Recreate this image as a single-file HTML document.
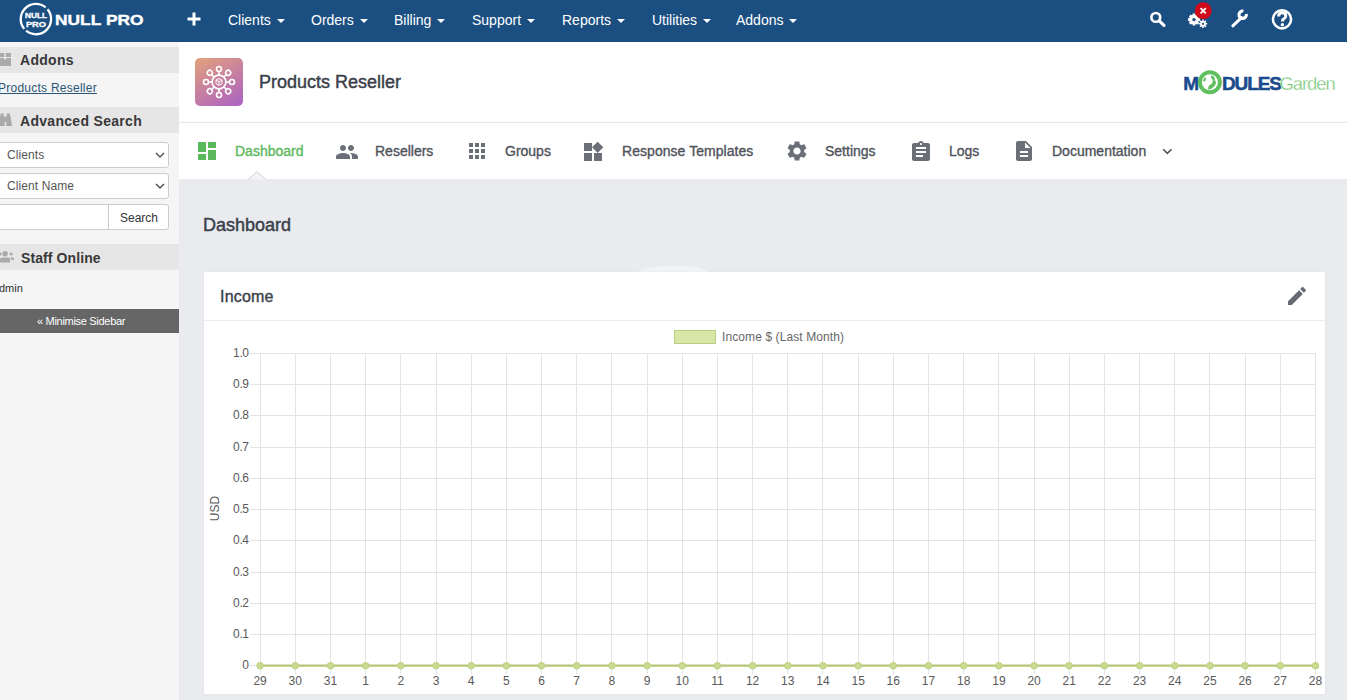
<!DOCTYPE html>
<html><head><meta charset="utf-8">
<style>
*{margin:0;padding:0;box-sizing:border-box}
html,body{width:1347px;height:700px;overflow:hidden;background:#e9ebef;font-family:"Liberation Sans",sans-serif}
.a{position:absolute;white-space:nowrap}
#nav{position:absolute;left:0;top:0;width:1347px;height:42px;background:#1b4f82}
.ni{position:absolute;top:12px;color:#fff;font-size:14px;line-height:16px}
.ni i{display:inline-block;width:0;height:0;border-left:4px solid transparent;border-right:4px solid transparent;border-top:4px solid #fff;vertical-align:middle;margin-left:6px;margin-top:-1px}
#side{position:absolute;left:0;top:42px;width:179px;height:658px;background:#f5f5f5}
.sh{position:absolute;left:0;width:179px;height:26px;background:#e6e6e6;color:#383838;font-weight:bold;font-size:14px;letter-spacing:0.3px}
.sh span{position:absolute;left:20px;top:6px;line-height:16px}
.sel{position:absolute;left:-6px;width:175px;height:26px;background:#fff;border:1px solid #ccc;border-radius:3px;font-size:12px;color:#555}
.sel span{position:absolute;left:12px;top:5px;line-height:14px;letter-spacing:0.1px}
#hdr{position:absolute;left:179px;top:42px;width:1168px;height:137px;background:#fff}
.tab{position:absolute;top:143px;font-size:14px;line-height:16px;color:#4f535b;-webkit-text-stroke:0.35px #4f535b}
.ic{position:absolute;fill:#6b6f77}
svg text{font-family:"Liberation Sans",sans-serif;font-size:12px;fill:#595959}
</style></head><body>
<div id="nav">
 <svg class="a" style="left:0;top:0" width="180" height="42">
  <path d="M47.54 9.33 A15.2 15.2 0 0 1 26.13 30.74" stroke="#fff" stroke-width="2.3" fill="none"/>
  <path d="M24.26 28.87 A15.2 15.2 0 0 1 45.67 7.46" stroke="#fff" stroke-width="2.3" fill="none"/>
  <text transform="translate(25 17.7) scale(1.14 1)" style="font-family:'Liberation Sans';font-weight:bold;font-size:7.3px;fill:#fff;stroke:#fff;stroke-width:0.3px">NULL</text>
  <text transform="translate(25.9 26.9) scale(1.26 1)" style="font-family:'Liberation Sans';font-weight:bold;font-size:7.4px;fill:#fff;stroke:#fff;stroke-width:0.3px">PRO</text>
  <text transform="translate(55 24.5) scale(1.13 1)" style="font-family:'Liberation Sans';font-weight:bold;font-size:15.4px;fill:#fff;stroke:#fff;stroke-width:0.4px">NULL PRO</text>
 </svg>
 <svg class="a" style="left:186px;top:11.3px" width="16" height="16"><path d="M8 1.5V14.5M1.5 8H14.5" stroke="#fff" stroke-width="3"/></svg>
 <div class="ni" style="left:228px">Clients<i></i></div>
 <div class="ni" style="left:311px">Orders<i></i></div>
 <div class="ni" style="left:394px">Billing<i></i></div>
 <div class="ni" style="left:472px">Support<i></i></div>
 <div class="ni" style="left:562px">Reports<i></i></div>
 <div class="ni" style="left:652px">Utilities<i></i></div>
 <div class="ni" style="left:736px">Addons<i></i></div>
 <svg class="a" style="left:1140px;top:0" width="207" height="42">
  <circle cx="15.8" cy="17.4" r="4.4" stroke="#fff" stroke-width="2.6" fill="none"/>
  <path d="M19.2 20.8 L24 25.4" stroke="#fff" stroke-width="3.2" stroke-linecap="round"/>
  <g fill="#fff">
   <circle cx="54" cy="19.6" r="4.9"/>
   <path d="M54 13.6v12M48 19.6h12M49.8 15.4l8.4 8.4M58.2 15.4l-8.4 8.4" stroke="#fff" stroke-width="2.8"/>
   <circle cx="63" cy="23.8" r="2.9"/>
   <path d="M63 19.6v8.4M58.8 23.8h8.4M60 20.8l6 6M66 20.8l-6 6" stroke="#fff" stroke-width="1.6"/>
  </g>
  <circle cx="54" cy="19.6" r="1.7" fill="#1b4f82"/>
  <circle cx="63" cy="23.8" r="1.1" fill="#1b4f82"/>
  <circle cx="63.2" cy="10.7" r="8.5" fill="#cf0a1a"/>
  <path d="M60.6 8.1 L65.8 13.3 M65.8 8.1 L60.6 13.3" stroke="#fff" stroke-width="1.8"/>
  <path d="M92.8 25.8 L101.5 17.6" stroke="#fff" stroke-width="3" stroke-linecap="round"/>
  <path d="M106.3 14 A3.7 3.7 0 1 1 103.4 11.1" stroke="#fff" stroke-width="3.1" fill="none"/>
  <circle cx="142" cy="19.3" r="9.1" stroke="#fff" stroke-width="2.5" fill="none"/>
  <path d="M138.6 16.4 Q138.6 12.8 142.2 12.8 Q145.8 12.8 145.8 15.9 Q145.8 17.8 143.8 18.8 Q142.4 19.5 142.4 21.4" stroke="#fff" stroke-width="3" fill="none"/>
  <circle cx="142.4" cy="24.8" r="1.7" fill="#fff"/>
 </svg>
</div>
<div id="side">
 <div class="sh" style="top:5px;height:26px"><span style="top:5px">Addons</span>
  <svg class="a" style="left:0;top:-1px" width="16" height="27"><path d="M0 7h4.4v4H0zM5.9 7H11v4H5.9zM0 12h11v8H0z" fill="#aaa"/><path d="M4.2 12h2v1.6h-2z" fill="#e6e6e6"/></svg>
 </div>
 <div class="a" style="left:-2px;top:39px;font-size:12px;line-height:14px;color:#2b5678;text-decoration:underline;letter-spacing:0.25px">Products Reseller</div>
 <div class="sh" style="top:65px"><span>Advanced Search</span>
  <svg class="a" style="left:0;top:0" width="16" height="26"><path d="M0.5 6.5h3v3h-3zM6.8 6.5h3.2v3H6.8zM0 9h4.4l0.3 10H0zM6.2 9h4.3l1.5 10H6.2zM4.4 10h1.8v5H4.4z" fill="#aaa"/></svg>
 </div>
 <div class="sel" style="top:100px"><span>Clients</span>
  <svg class="a" style="left:160px;top:9px" width="10" height="7"><path d="M1 1l4 4 4-4" stroke="#555" stroke-width="1.5" fill="none"/></svg></div>
 <div class="sel" style="top:131px"><span>Client Name</span>
  <svg class="a" style="left:160px;top:9px" width="10" height="7"><path d="M1 1l4 4 4-4" stroke="#555" stroke-width="1.5" fill="none"/></svg></div>
 <div class="a" style="left:-6px;top:162px;width:175px;height:26px;background:#fff;border:1px solid #ccc;border-radius:3px"></div>
 <div class="a" style="left:108px;top:162px;width:61px;height:26px;border-left:1px solid #ccc;font-size:12px;line-height:14px;color:#333;padding:7px 0 0 11px">Search</div>
 <div class="sh" style="top:202px"><span style="letter-spacing:0.1px;left:21px">Staff Online</span>
  <svg class="a" style="left:0;top:0" width="16" height="26"><circle cx="5.1" cy="9.8" r="2.7" fill="#aaa"/><circle cx="11.1" cy="10" r="1.6" fill="#aaa"/><circle cx="0.2" cy="10" r="1.6" fill="#aaa"/><path d="M0 18.6V15.4Q0 13.6 2 13.6H8Q10 13.6 10 15.4V18.6z M10.3 13.4H13.2Q14 13.4 14 14.2V15.8H11z" fill="#aaa"/></svg>
 </div>
 <div class="a" style="left:-1px;top:240px;font-size:11px;line-height:13px;color:#333">dmin</div>
 <div class="a" style="left:0;top:267px;width:179px;height:24px;background:#666;color:#fff;font-size:11px;line-height:13px;letter-spacing:-0.3px;padding:6px 0 0 37px">« Minimise Sidebar</div>
</div>
<div id="hdr">
 <div class="a" style="left:0;top:80px;width:1168px;height:1px;background:#e8e8e8"></div>
</div>
<div class="a" style="left:195px;top:58px;width:48px;height:48px;border-radius:5px;background:linear-gradient(150deg,#e2a27a 0%,#c780a0 50%,#a862c4 100%)"></div>
<svg class="a" style="left:195px;top:58px" width="48" height="48">
 <g stroke="#fff" stroke-width="1.6" fill="none">
  <circle cx="24" cy="24" r="6.9"/>
  <g transform="rotate(0 24 24)"><path d="M24 17.2V13.6"/><circle cx="24" cy="11" r="2.5"/></g>
  <g transform="rotate(45 24 24)"><path d="M24 17.2V13.6"/><circle cx="24" cy="11" r="2.5"/></g>
  <g transform="rotate(90 24 24)"><path d="M24 17.2V13.6"/><circle cx="24" cy="11" r="2.5"/></g>
  <g transform="rotate(135 24 24)"><path d="M24 17.2V13.6"/><circle cx="24" cy="11" r="2.5"/></g>
  <g transform="rotate(180 24 24)"><path d="M24 17.2V13.6"/><circle cx="24" cy="11" r="2.5"/></g>
  <g transform="rotate(225 24 24)"><path d="M24 17.2V13.6"/><circle cx="24" cy="11" r="2.5"/></g>
  <g transform="rotate(270 24 24)"><path d="M24 17.2V13.6"/><circle cx="24" cy="11" r="2.5"/></g>
  <g transform="rotate(315 24 24)"><path d="M24 17.2V13.6"/><circle cx="24" cy="11" r="2.5"/></g>
  <path d="M24 20.5l3 1.6v3.6l-3 1.6-3-1.6v-3.6zM21 22.1l3 1.6 3-1.6M24 23.7v3.6" stroke-width="1"/>
 </g>
</svg>
<div class="a" style="left:259px;top:71.5px;font-size:18px;line-height:20px;color:#3b404a;-webkit-text-stroke:0.45px #3b404a">Products Reseller</div>
<!-- modulesgarden logo -->
<svg class="a" style="left:1180px;top:66px" width="160" height="32">
 <text x="3.3" y="23.5" style="font-family:'Liberation Sans';font-weight:bold;font-size:19px;fill:#1b4b8d;stroke:#1b4b8d;stroke-width:0.5px;letter-spacing:-0.6px">M</text>
 <circle cx="29.9" cy="16.2" r="10" stroke="#5fbf5f" stroke-width="3.9" fill="#fff"/>
 <path d="M22.8 15 l1.6-3.6 l1.8 0.6 l-1 3.4 z M31 9.3 l2.2 0.8 l2.2 3 l-1.8 1.4 l-2.4-2.2 z M27.5 23.5 l1.5-4 l3-2 l1-3.5 l2.5 0.5 l0.5 3 l-2 3 l-3 2.5z" fill="#62bd5e"/>
 <text x="42" y="23.5" style="font-family:'Liberation Sans';font-weight:bold;font-size:19px;fill:#1b4b8d;stroke:#1b4b8d;stroke-width:0.5px;letter-spacing:-1.1px">DULES</text>
 <text x="99.5" y="23.5" style="font-family:'Liberation Sans';font-size:18.5px;fill:#72c472;stroke:#fff;stroke-width:0.35px;letter-spacing:-1.1px">Garden</text>
</svg>
<!-- tabs -->
<svg class="ic" style="left:195px;top:139px" width="24" height="24" viewBox="0 0 24 24"><path fill="#5cb85c" d="M3 13h8V3H3v10zm0 8h8v-6H3v6zm10 0h8V11h-8v10zm0-18v6h8V3h-8z"/></svg>
<div class="tab" style="left:235px;color:#5cb85c;-webkit-text-stroke:0.35px #5cb85c">Dashboard</div>
<svg class="ic" style="left:335px;top:139.5px" width="24" height="24" viewBox="0 0 24 24"><path d="M16 11c1.66 0 2.99-1.34 2.99-3S17.66 5 16 5c-1.66 0-3 1.340-3 3s1.34 3 3 3zm-8 0c1.66 0 2.99-1.34 2.99-3S9.66 5 8 5C6.34 5 5 6.34 5 8s1.34 3 3 3zm0 2c-2.33 0-7 1.17-7 3.5V19h14v-2.5c0-2.33-4.67-3.5-7-3.5zm8 0c-.29 0-.62.02-.970.05 1.16.84 1.97 1.97 1.97 3.45V19h6v-2.5c0-2.33-4.67-3.5-7-3.5z"/></svg>
<div class="tab" style="left:375px">Resellers</div>
<svg class="ic" style="left:464.5px;top:139px" width="24" height="24" viewBox="0 0 24 24"><path d="M4 8h4V4H4v4zm6 12h4v-4h-4v4zm-6 0h4v-4H4v4zm0-6h4v-4H4v4zm6 0h4v-4h-4v4zm6-10v4h4V4h-4zm-6 4h4V4h-4v4zm6 6h4v-4h-4v4zm0 6h4v-4h-4v4z"/></svg>
<div class="tab" style="left:505px">Groups</div>
<svg class="ic" style="left:581px;top:139.5px" width="24" height="24" viewBox="0 0 24 24"><path d="M13 13v8h8v-8h-8zM3 21h8v-8H3v8zM3 3v8h8V3H3zm13.66-1.31L11 7.34 16.66 13l5.66-5.66-5.66-5.65z"/></svg>
<div class="tab" style="left:622px;letter-spacing:0.05px">Response Templates</div>
<svg class="ic" style="left:785px;top:139px" width="24" height="24" viewBox="0 0 24 24"><path d="M19.14 12.94c.04-.3.06-.61.06-.94 0-.32-.02-.64-.07-.94l2.03-1.58c.18-.14.23-.41.12-.61l-1.920-3.32c-.12-.22-.37-.29-.59-.22l-2.39.96c-.5-.38-1.03-.7-1.62-.94l-.36-2.54c-.04-.24-.24-.41-.48-.41h-3.84c-.24 0-.43.17-.47.41l-.36 2.54c-.59.24-1.13.57-1.62.94l-2.39-.96c-.22-.08-.47 0-.59.22L2.74 8.87c-.12.21-.08.47.12.61l2.03 1.58c-.05.3-.09.63-.09.94s.02.64.07.94l-2.03 1.58c-.18.14-.23.41-.12.61l1.92 3.32c.12.22.37.29.59.22l2.39-.96c.5.38 1.03.7 1.62.94l.36 2.54c.05.24.24.41.48.41h3.84c.24 0 .44-.17.47-.41l.36-2.54c.59-.24 1.13-.56 1.62-.94l2.39.96c.22.08.47 0 .59-.22l1.92-3.32c.12-.22.07-.47-.12-.61l-2.01-1.58zM12 15.6c-1.98 0-3.6-1.62-3.6-3.6s1.62-3.6 3.6-3.6 3.6 1.62 3.6 3.6-1.62 3.6-3.6 3.6z"/></svg>
<div class="tab" style="left:825px">Settings</div>
<svg class="ic" style="left:908.5px;top:140px" width="24" height="24" viewBox="0 0 24 24"><path d="M19 3h-4.18C14.4 1.84 13.3 1 12 1c-1.3 0-2.4.84-2.82 2H5c-1.1 0-2 .9-2 2v14c0 1.1.9 2 2 2h14c1.1 0 2-.9 2-2V5c0-1.1-.9-2-2-2zm-7 0c.55 0 1 .45 1 1s-.45 1-1 1-1-.45-1-1 .45-1 1-1zm2 14H7v-2h7v2zm3-4H7v-2h10v2zm0-4H7V7h10v2z"/></svg>
<div class="tab" style="left:949px">Logs</div>
<svg class="ic" style="left:1011.5px;top:139px" width="24" height="24" viewBox="0 0 24 24"><path d="M14 2H6c-1.1 0-1.99.9-1.99 2L4 20c0 1.1.89 2 1.99 2H18c1.1 0 2-.9 2-2V8l-6-6zm2 16H8v-2h8v2zm0-4H8v-2h8v2zm-3-5V3.5L18.5 9H13z"/></svg>
<div class="tab" style="left:1052px">Documentation</div>
<svg class="ic" style="left:1158.3px;top:142.3px" width="18.7" height="18.7" viewBox="0 0 24 24"><path d="M16.59 8.59L12 13.17 7.41 8.59 6 10l6 6 6-6z" fill="#4b5059"/></svg>
<svg class="a" style="left:247px;top:171px" width="20" height="9"><path d="M1 8.5 L10 0.8 L19 8.5" stroke="#d2d3d7" stroke-width="1" fill="#f4f4f6"/></svg>
<!-- dashboard title -->
<div class="a" style="left:203px;top:215px;font-size:18px;line-height:20px;color:#3b404a;-webkit-text-stroke:0.45px #3b404a">Dashboard</div>
<!-- card -->
<svg class="a" style="left:620px;top:255px" width="110" height="30"><ellipse cx="54" cy="21" rx="39" ry="10.5" fill="#f2f3f5"/></svg>
<div class="a" style="left:203.5px;top:272px;width:1121.5px;height:422px;background:#fff;box-shadow:0 0 2px rgba(0,0,0,0.06)"></div>
<div class="a" style="left:203px;top:320px;width:1122px;height:1px;background:#ececec"></div>
<div class="a" style="left:220px;top:288px;font-size:16px;line-height:18px;color:#3b404a;-webkit-text-stroke:0.4px #3b404a;letter-spacing:0.2px">Income</div>
<svg class="ic" style="left:1285px;top:284px" width="24" height="24" viewBox="0 0 24 24"><path fill="#666a72" d="M3 17.25V21h3.75L17.81 9.94l-3.75-3.75L3 17.25zM20.71 7.04c.39-.39.39-1.02 0-1.41l-2.34-2.34c-.39-.39-1.02-.39-1.41 0l-1.83 1.83 3.75 3.75 1.83-1.83z"/></svg>
<div class="a" style="left:674px;top:330px;width:42px;height:14px;background:#d8e6a8;border:1px solid #bccf80"></div>
<div class="a" style="left:722px;top:329.5px;font-size:12px;line-height:14px;color:#666;letter-spacing:0.1px">Income $ (Last Month)</div>
<svg width="1347" height="700" style="position:absolute;left:0;top:0">
<path d="M260.5 353V674 M295.5 353V674 M330.5 353V674 M365.5 353V674 M400.5 353V674 M436.5 353V674 M471.5 353V674 M506.5 353V674 M541.5 353V674 M576.5 353V674 M611.5 353V674 M647.5 353V674 M682.5 353V674 M717.5 353V674 M752.5 353V674 M787.5 353V674 M822.5 353V674 M858.5 353V674 M893.5 353V674 M928.5 353V674 M963.5 353V674 M998.5 353V674 M1034.5 353V674 M1069.5 353V674 M1104.5 353V674 M1139.5 353V674 M1174.5 353V674 M1209.5 353V674 M1245.5 353V674 M1280.5 353V674 M1315.5 353V674 M250 353.5H1315 M250 384.5H1315 M250 415.5H1315 M250 447.5H1315 M250 478.5H1315 M250 509.5H1315 M250 540.5H1315 M250 572.5H1315 M250 603.5H1315 M250 634.5H1315 M250 665.5H1315" stroke="#e4e4e4" stroke-width="1" fill="none"/>
<text x="248.6" y="356.6" text-anchor="end" style="letter-spacing:-0.4px">1.0</text>
<text x="248.6" y="387.6" text-anchor="end" style="letter-spacing:-0.4px">0.9</text>
<text x="248.6" y="418.6" text-anchor="end" style="letter-spacing:-0.4px">0.8</text>
<text x="248.6" y="450.6" text-anchor="end" style="letter-spacing:-0.4px">0.7</text>
<text x="248.6" y="481.6" text-anchor="end" style="letter-spacing:-0.4px">0.6</text>
<text x="248.6" y="512.6" text-anchor="end" style="letter-spacing:-0.4px">0.5</text>
<text x="248.6" y="543.6" text-anchor="end" style="letter-spacing:-0.4px">0.4</text>
<text x="248.6" y="575.6" text-anchor="end" style="letter-spacing:-0.4px">0.3</text>
<text x="248.6" y="606.6" text-anchor="end" style="letter-spacing:-0.4px">0.2</text>
<text x="248.6" y="637.6" text-anchor="end" style="letter-spacing:-0.4px">0.1</text>
<text x="248.6" y="668.6" text-anchor="end" style="letter-spacing:-0.4px">0</text>
<text x="260.1" y="685" text-anchor="middle">29</text>
<text x="295.3" y="685" text-anchor="middle">30</text>
<text x="330.5" y="685" text-anchor="middle">31</text>
<text x="365.6" y="685" text-anchor="middle">1</text>
<text x="400.8" y="685" text-anchor="middle">2</text>
<text x="436.0" y="685" text-anchor="middle">3</text>
<text x="471.2" y="685" text-anchor="middle">4</text>
<text x="506.4" y="685" text-anchor="middle">5</text>
<text x="541.5" y="685" text-anchor="middle">6</text>
<text x="576.7" y="685" text-anchor="middle">7</text>
<text x="611.9" y="685" text-anchor="middle">8</text>
<text x="647.1" y="685" text-anchor="middle">9</text>
<text x="682.3" y="685" text-anchor="middle">10</text>
<text x="717.4" y="685" text-anchor="middle">11</text>
<text x="752.6" y="685" text-anchor="middle">12</text>
<text x="787.8" y="685" text-anchor="middle">13</text>
<text x="823.0" y="685" text-anchor="middle">14</text>
<text x="858.2" y="685" text-anchor="middle">15</text>
<text x="893.3" y="685" text-anchor="middle">16</text>
<text x="928.5" y="685" text-anchor="middle">17</text>
<text x="963.7" y="685" text-anchor="middle">18</text>
<text x="998.9" y="685" text-anchor="middle">19</text>
<text x="1034.1" y="685" text-anchor="middle">20</text>
<text x="1069.2" y="685" text-anchor="middle">21</text>
<text x="1104.4" y="685" text-anchor="middle">22</text>
<text x="1139.6" y="685" text-anchor="middle">23</text>
<text x="1174.8" y="685" text-anchor="middle">24</text>
<text x="1210.0" y="685" text-anchor="middle">25</text>
<text x="1245.1" y="685" text-anchor="middle">26</text>
<text x="1280.3" y="685" text-anchor="middle">27</text>
<text x="1315.5" y="685" text-anchor="middle">28</text>
<path d="M260.1 665.7H1315.5" stroke="#b5c776" stroke-width="2.2"/>
<circle cx="260.1" cy="665.7" r="3.3" fill="#cadb90" stroke="#bfd184" stroke-width="1"/>
<circle cx="295.3" cy="665.7" r="3.3" fill="#cadb90" stroke="#bfd184" stroke-width="1"/>
<circle cx="330.5" cy="665.7" r="3.3" fill="#cadb90" stroke="#bfd184" stroke-width="1"/>
<circle cx="365.6" cy="665.7" r="3.3" fill="#cadb90" stroke="#bfd184" stroke-width="1"/>
<circle cx="400.8" cy="665.7" r="3.3" fill="#cadb90" stroke="#bfd184" stroke-width="1"/>
<circle cx="436.0" cy="665.7" r="3.3" fill="#cadb90" stroke="#bfd184" stroke-width="1"/>
<circle cx="471.2" cy="665.7" r="3.3" fill="#cadb90" stroke="#bfd184" stroke-width="1"/>
<circle cx="506.4" cy="665.7" r="3.3" fill="#cadb90" stroke="#bfd184" stroke-width="1"/>
<circle cx="541.5" cy="665.7" r="3.3" fill="#cadb90" stroke="#bfd184" stroke-width="1"/>
<circle cx="576.7" cy="665.7" r="3.3" fill="#cadb90" stroke="#bfd184" stroke-width="1"/>
<circle cx="611.9" cy="665.7" r="3.3" fill="#cadb90" stroke="#bfd184" stroke-width="1"/>
<circle cx="647.1" cy="665.7" r="3.3" fill="#cadb90" stroke="#bfd184" stroke-width="1"/>
<circle cx="682.3" cy="665.7" r="3.3" fill="#cadb90" stroke="#bfd184" stroke-width="1"/>
<circle cx="717.4" cy="665.7" r="3.3" fill="#cadb90" stroke="#bfd184" stroke-width="1"/>
<circle cx="752.6" cy="665.7" r="3.3" fill="#cadb90" stroke="#bfd184" stroke-width="1"/>
<circle cx="787.8" cy="665.7" r="3.3" fill="#cadb90" stroke="#bfd184" stroke-width="1"/>
<circle cx="823.0" cy="665.7" r="3.3" fill="#cadb90" stroke="#bfd184" stroke-width="1"/>
<circle cx="858.2" cy="665.7" r="3.3" fill="#cadb90" stroke="#bfd184" stroke-width="1"/>
<circle cx="893.3" cy="665.7" r="3.3" fill="#cadb90" stroke="#bfd184" stroke-width="1"/>
<circle cx="928.5" cy="665.7" r="3.3" fill="#cadb90" stroke="#bfd184" stroke-width="1"/>
<circle cx="963.7" cy="665.7" r="3.3" fill="#cadb90" stroke="#bfd184" stroke-width="1"/>
<circle cx="998.9" cy="665.7" r="3.3" fill="#cadb90" stroke="#bfd184" stroke-width="1"/>
<circle cx="1034.1" cy="665.7" r="3.3" fill="#cadb90" stroke="#bfd184" stroke-width="1"/>
<circle cx="1069.2" cy="665.7" r="3.3" fill="#cadb90" stroke="#bfd184" stroke-width="1"/>
<circle cx="1104.4" cy="665.7" r="3.3" fill="#cadb90" stroke="#bfd184" stroke-width="1"/>
<circle cx="1139.6" cy="665.7" r="3.3" fill="#cadb90" stroke="#bfd184" stroke-width="1"/>
<circle cx="1174.8" cy="665.7" r="3.3" fill="#cadb90" stroke="#bfd184" stroke-width="1"/>
<circle cx="1210.0" cy="665.7" r="3.3" fill="#cadb90" stroke="#bfd184" stroke-width="1"/>
<circle cx="1245.1" cy="665.7" r="3.3" fill="#cadb90" stroke="#bfd184" stroke-width="1"/>
<circle cx="1280.3" cy="665.7" r="3.3" fill="#cadb90" stroke="#bfd184" stroke-width="1"/>
<circle cx="1315.5" cy="665.7" r="3.3" fill="#cadb90" stroke="#bfd184" stroke-width="1"/>
<text x="0" y="0" transform="translate(218.6 508.5) rotate(-90)" text-anchor="middle">USD</text>
</svg></body></html>
